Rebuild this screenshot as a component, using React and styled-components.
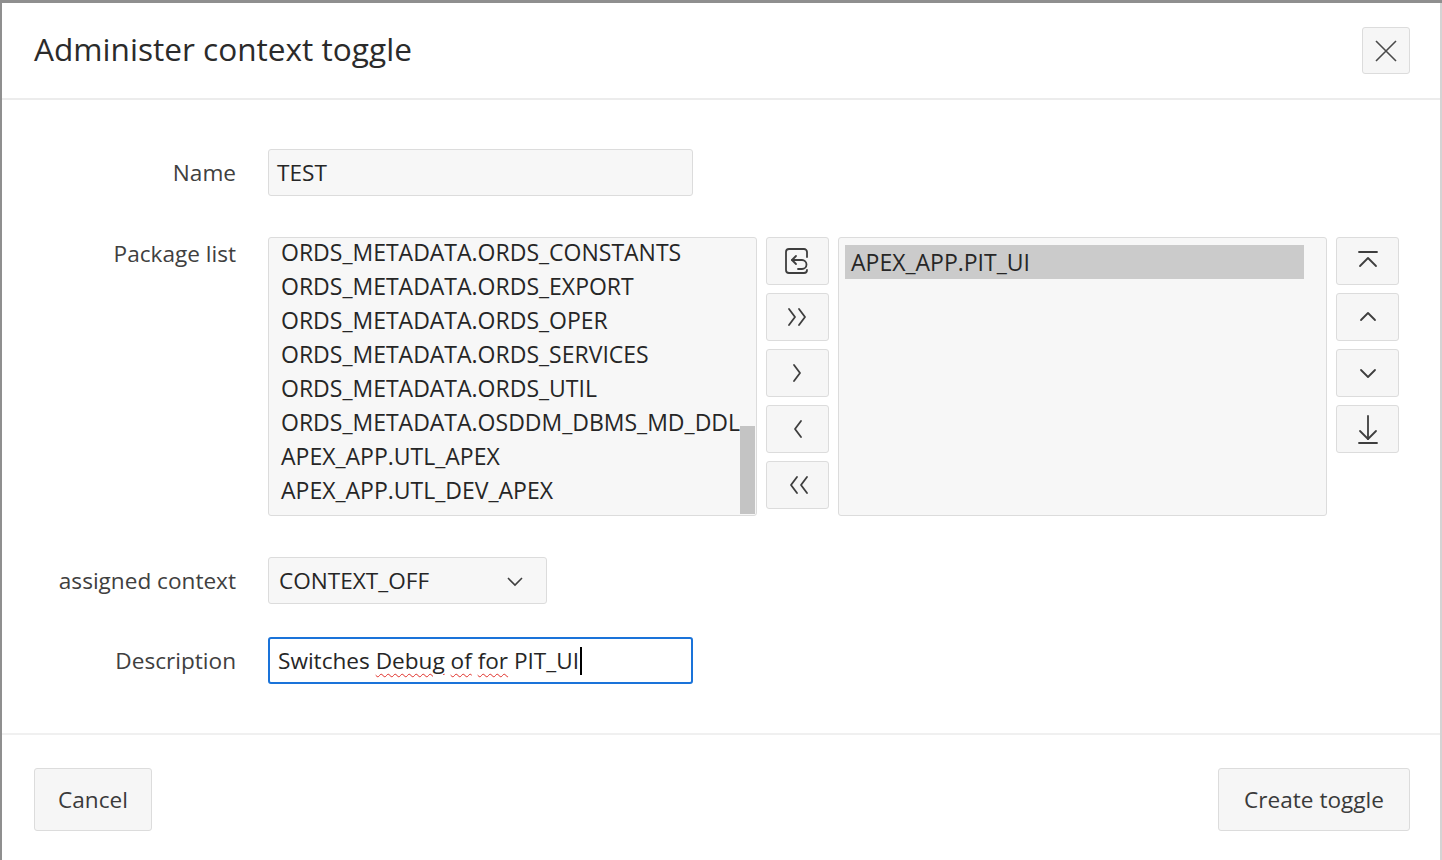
import React from "react";
import styled, { createGlobalStyle } from "styled-components";

const GlobalStyle = createGlobalStyle`
  html, body {
    margin: 0;
    padding: 0;
    background: #8f8f8f;
    font-family: "Open Sans", "Noto Sans", sans-serif;
    overflow: hidden;
  }
`;

const available = [
  "ORDS_METADATA.ORDS_CONSTANTS",
  "ORDS_METADATA.ORDS_EXPORT",
  "ORDS_METADATA.ORDS_OPER",
  "ORDS_METADATA.ORDS_SERVICES",
  "ORDS_METADATA.ORDS_UTIL",
  "ORDS_METADATA.OSDDM_DBMS_MD_DDL",
  "APEX_APP.UTL_APEX",
  "APEX_APP.UTL_DEV_APEX",
];

const Icon = ({ children }) => (
  <svg
    width="32"
    height="32"
    viewBox="0 0 32 32"
    fill="none"
    stroke="#3e3e3e"
    strokeWidth="1.8"
    strokeLinecap="round"
    strokeLinejoin="round"
  >
    {children}
  </svg>
);

const shuttleIcons = [
  <Icon key="reset">
    <path d="M25 12 V7 a3 3 0 0 0 -3 -3 H7 a3 3 0 0 0 -3 3 V25 a3 3 0 0 0 3 3 H22 a3 3 0 0 0 3 -3" />
    <path d="M10 15 H20 a4.5 4.5 0 0 1 0 9 H16" />
    <path d="M14 11 L10 15 L14 19" />
  </Icon>,
  <Icon key="all-right">
    <path d="M7 8 L13 16 L7 24" />
    <path d="M17 8 L23 16 L17 24" />
  </Icon>,
  <Icon key="right">
    <path d="M12 8 L18 16 L12 24" />
  </Icon>,
  <Icon key="left">
    <path d="M19 8 L13 16 L19 24" />
  </Icon>,
  <Icon key="all-left">
    <path d="M15 8 L9 16 L15 24" />
    <path d="M25 8 L19 16 L25 24" />
  </Icon>,
];

const orderIcons = [
  <Icon key="top">
    <path d="M7 7 H25" />
    <path d="M8 21 L16 13 L24 21" />
  </Icon>,
  <Icon key="up">
    <path d="M9 19 L16 12 L23 19" />
  </Icon>,
  <Icon key="down">
    <path d="M9 13 L16 20 L23 13" />
  </Icon>,
  <Icon key="bottom">
    <path d="M16 3 V26" />
    <path d="M8 18 L16 26 L24 18" />
    <path d="M7 30 H25" />
  </Icon>,
];

export default function App() {
  return (
    <>
      <GlobalStyle />
      <Dialog>
        <Header>
          <Title>Administer context toggle</Title>
          <CloseButton aria-label="Close">
            <svg width="26" height="26" viewBox="0 0 26 26" stroke="#4a4a4a" strokeWidth="1.6">
              <path d="M3 3 L23 23 M23 3 L3 23" />
            </svg>
          </CloseButton>
        </Header>

        <Body>
          <Row>
            <Label offset={8}>Name</Label>
            <TextField width={425}>TEST</TextField>
          </Row>

          <Row spaced>
            <Label offset={1}>Package list</Label>
            <Shuttle>
              <ListBox pad={0}>
                <ListScroll shift={3}>
                  {available.map((item) => (
                    <ListItem key={item}>{item}</ListItem>
                  ))}
                </ListScroll>
                <ScrollThumb />
              </ListBox>
              <ButtonColumn>
                {shuttleIcons.map((icon, i) => (
                  <IconButton key={i}>{icon}</IconButton>
                ))}
              </ButtonColumn>
              <ListBox pad={7}>
                <ListItem selected>APEX_APP.PIT_UI</ListItem>
              </ListBox>
              <ButtonColumn>
                {orderIcons.map((icon, i) => (
                  <IconButton key={i}>{icon}</IconButton>
                ))}
              </ButtonColumn>
            </Shuttle>
          </Row>

          <Row>
            <Label offset={8}>assigned context</Label>
            <Select>
              <span>CONTEXT_OFF</span>
              <svg width="22" height="22" viewBox="0 0 22 22" fill="none" stroke="#404040" strokeWidth="1.6">
                <path d="M4 8 L11 15 L18 8" />
              </svg>
            </Select>
          </Row>

          <Row>
            <Label offset={8}>Description</Label>
            <TextField width={425} focused>
              <span>
                Switches <Misspelled>Debug</Misspelled> <Misspelled>of</Misspelled>{" "}
                <Misspelled>for</Misspelled> PIT_UI
              </span>
              <Caret />
            </TextField>
          </Row>
        </Body>

        <Footer>
          <FooterButton>Cancel</FooterButton>
          <FooterButton wide>Create toggle</FooterButton>
        </Footer>
      </Dialog>
    </>
  );
}

const Dialog = styled.div`
  margin: 3px 0 0 2px;
  width: 1438px;
  height: 857px;
  background: #ffffff;
  border-right: 2px solid #d4d4d4;
  display: flex;
  flex-direction: column;
  color: #262626;
`;

const Header = styled.div`
  height: 95px;
  flex-shrink: 0;
  display: flex;
  align-items: center;
  justify-content: space-between;
  padding: 0 30px 0 32px;
  border-bottom: 2px solid #ececec;
`;

const Title = styled.h1`
  margin: 0 0 4px;
  font-size: 31.6px;
  font-weight: 400;
  color: #2b2b2b;
`;

const CloseButton = styled.button`
  width: 48px;
  height: 47px;
  display: flex;
  align-items: center;
  justify-content: center;
  background: #f6f6f6;
  border: 1px solid #dcdcdc;
  border-radius: 3px;
  padding: 0;
`;

const Body = styled.div`
  flex: 1;
  display: flex;
  flex-direction: column;
  gap: 33px;
  padding: 49px 0 0 32px;
  border-bottom: 2px solid #f0f0f0;
`;

const Row = styled.div`
  display: flex;
  align-items: flex-start;
  gap: 32px;
  margin: ${(p) => (p.spaced ? "8px 0" : "0")};
`;

const Label = styled.div`
  width: 202px;
  flex-shrink: 0;
  text-align: right;
  font-size: 22.6px;
  color: #404040;
  padding-top: ${(p) => p.offset}px;
`;

const TextField = styled.div`
  box-sizing: border-box;
  width: ${(p) => p.width}px;
  height: 47px;
  display: flex;
  align-items: center;
  white-space: pre;
  padding: 0 8px;
  font-size: 22.6px;
  color: #262626;
  background: ${(p) => (p.focused ? "#ffffff" : "#f7f7f7")};
  border: ${(p) => (p.focused ? "2px solid #1a73d9" : "1px solid #dcdcdc")};
  border-radius: 3px;
`;

const Misspelled = styled.span`
  text-decoration: underline wavy #e0302a;
  text-decoration-thickness: 1px;
  text-underline-offset: 4px;
`;

const Caret = styled.span`
  display: inline-block;
  width: 2px;
  height: 28px;
  background: #000;
  margin-left: 1px;
`;

const Shuttle = styled.div`
  display: flex;
  gap: 9px;
`;

const ListBox = styled.div`
  position: relative;
  box-sizing: border-box;
  width: 489px;
  height: 279px;
  background: #f7f7f7;
  border: 1px solid #dcdcdc;
  border-radius: 3px;
  padding: ${(p) => p.pad}px 6px;
  overflow: hidden;
`;

const ListScroll = styled.div`
  margin-top: ${(p) => -p.shift}px;
`;

const ListItem = styled.div`
  height: 34px;
  line-height: 34px;
  padding: 0 6px;
  font-size: 23px;
  color: #262626;
  white-space: nowrap;
  background: ${(p) => (p.selected ? "#cbcbcb" : "transparent")};
  width: ${(p) => (p.selected ? "459px" : "auto")};
  box-sizing: border-box;
`;

const ScrollThumb = styled.div`
  position: absolute;
  right: 1px;
  bottom: 1px;
  width: 15px;
  height: 88px;
  background: #c4c4c4;
`;

const ButtonColumn = styled.div`
  display: flex;
  flex-direction: column;
  gap: 8px;
`;

const IconButton = styled.button`
  width: 63px;
  height: 48px;
  display: flex;
  align-items: center;
  justify-content: center;
  padding: 0;
  background: #f6f6f6;
  border: 1px solid #dcdcdc;
  border-radius: 3px;
`;

const Select = styled.div`
  box-sizing: border-box;
  width: 279px;
  height: 47px;
  display: flex;
  align-items: center;
  justify-content: space-between;
  padding: 0 20px 0 10px;
  font-size: 22.6px;
  color: #262626;
  background: #f7f7f7;
  border: 1px solid #dcdcdc;
  border-radius: 3px;
`;

const Footer = styled.div`
  height: 125px;
  flex-shrink: 0;
  display: flex;
  align-items: flex-start;
  justify-content: space-between;
  padding: 33px 30px 0 32px;
  box-sizing: border-box;
`;

const FooterButton = styled.button`
  height: 63px;
  padding: 0 ${(p) => (p.wide ? 25 : 23)}px;
  font-family: "Open Sans", "Noto Sans", sans-serif;
  font-size: 22.6px;
  color: #3a3a3a;
  background: #f6f6f6;
  border: 1px solid #dcdcdc;
  border-radius: 3px;
`;
